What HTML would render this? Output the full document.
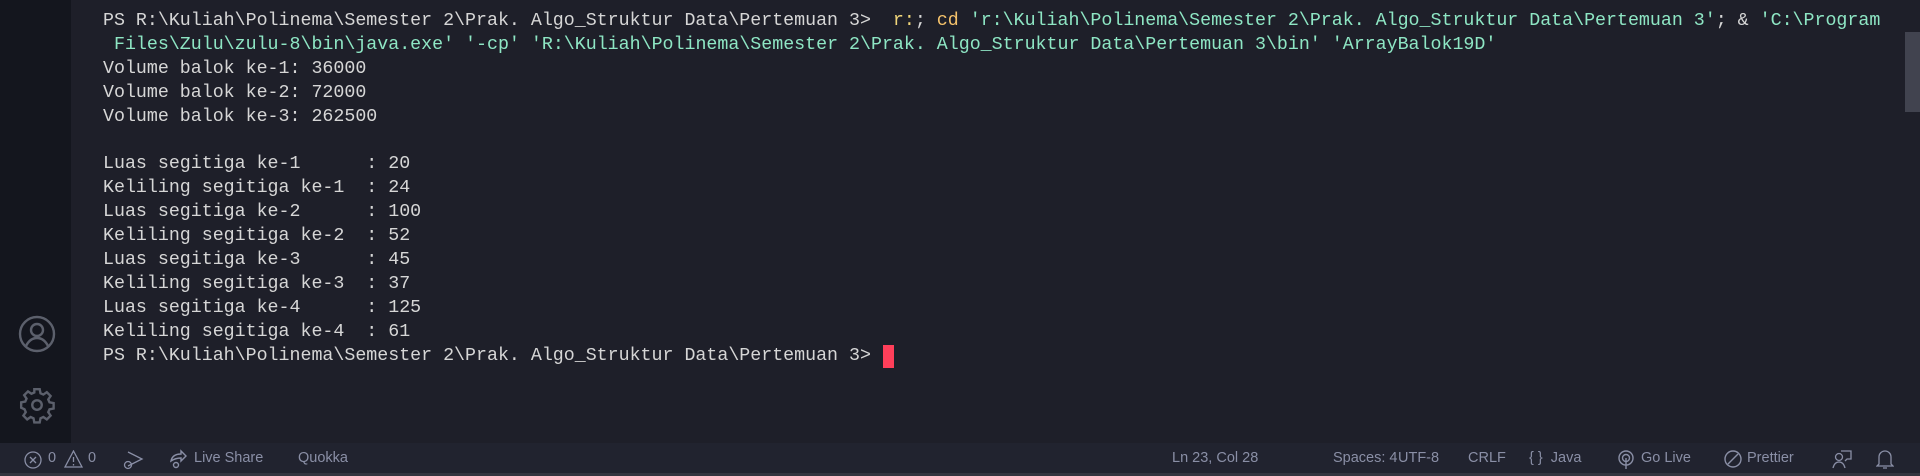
<!DOCTYPE html>
<html><head><meta charset="utf-8"><style>
*{margin:0;padding:0;box-sizing:border-box}
body{width:1920px;height:476px;background:#1e1f29;overflow:hidden;position:relative;font-family:"Liberation Sans",sans-serif}
#side{position:absolute;left:0;top:0;width:71px;height:443px;background:#14161e}
#term{position:absolute;left:103px;top:10px;font-family:"Liberation Mono",monospace;font-size:18.3px;line-height:23.9px;color:#d6d6d6;white-space:pre}
.y{color:#f1d67a}.o{color:#f5c26b}.t{color:#8ee6c4}
#sb{position:absolute;left:1905px;top:32px;width:15px;height:80px;background:#41434f}
#cur{position:absolute;left:883px;top:345px;width:11px;height:23px;background:#ff3f5a}
#status{position:absolute;left:0;top:443px;width:1920px;height:30px;background:#21232f;color:#8a8fa6;font-size:14.5px}
#status span{position:absolute;top:7px}
#strip{position:absolute;left:0;top:473px;width:1920px;height:3px;background:#33353f}
svg{position:absolute}
</style></head><body>
<div id="side">
<svg style="left:18px;top:315px" width="38" height="38" viewBox="0 0 38 38" fill="none" stroke="#5c606c" stroke-width="2.4"><circle cx="19" cy="19" r="17"/><circle cx="19" cy="15" r="6"/><path d="M8 31c3-6 7-8 11-8s8 2 11 8"/></svg>
<svg style="left:18px;top:386px" width="38" height="38" viewBox="0 0 24 24" fill="none" stroke="#5c606c" stroke-width="1.5"><circle cx="12" cy="12" r="3"/><path d="M10.3 2h3.4l.5 2.6 1.8.8 2.2-1.5 2.4 2.4-1.5 2.2.8 1.8 2.6.5v3.4l-2.6.5-.8 1.8 1.5 2.2-2.4 2.4-2.2-1.5-1.8.8-.5 2.6h-3.4l-.5-2.6-1.8-.8-2.200 1.5-2.4-2.4 1.5-2.2-.8-1.8L2 13.7v-3.4l2.6-.5.8-1.8-1.5-2.2 2.4-2.4 2.2 1.5 1.8-.8z"/></svg>
</div>
<div id="term">PS R:\Kuliah\Polinema\Semester 2\Prak. Algo_Struktur Data\Pertemuan 3&gt;  <span class="y">r:</span>; <span class="o">cd</span> <span class="t">'r:\Kuliah\Polinema\Semester 2\Prak. Algo_Struktur Data\Pertemuan 3'</span>; &amp; <span class="t">'C:\Program</span>
<span class="t"> Files\Zulu\zulu-8\bin\java.exe'</span> <span class="t">'-cp'</span> <span class="t">'R:\Kuliah\Polinema\Semester 2\Prak. Algo_Struktur Data\Pertemuan 3\bin'</span> <span class="t">'ArrayBalok19D'</span>
Volume balok ke-1: 36000
Volume balok ke-2: 72000
Volume balok ke-3: 262500

Luas segitiga ke-1      : 20
Keliling segitiga ke-1  : 24
Luas segitiga ke-2      : 100
Keliling segitiga ke-2  : 52
Luas segitiga ke-3      : 45
Keliling segitiga ke-3  : 37
Luas segitiga ke-4      : 125
Keliling segitiga ke-4  : 61
PS R:\Kuliah\Polinema\Semester 2\Prak. Algo_Struktur Data\Pertemuan 3&gt; </div>
<div id="cur"></div>
<div id="sb"></div>
<div id="status">
<svg style="left:24px;top:8px" width="18" height="18" viewBox="0 0 18 18" fill="none" stroke="#8a8fa6" stroke-width="1.3"><circle cx="9" cy="9" r="8"/><path d="M6 6l6 6M12 6l-6 6"/></svg>
<span style="left:48px">0</span>
<svg style="left:64px;top:7px" width="19" height="18" viewBox="0 0 19 18" fill="none" stroke="#8a8fa6" stroke-width="1.3"><path d="M9.5 1L18 17H1z"/><path d="M9.5 7v5M9.5 14v1.5"/></svg>
<span style="left:88px">0</span>
<svg style="left:122px;top:7px" width="22" height="20" viewBox="0 0 22 20" fill="none" stroke="#8a8fa6" stroke-width="1.3"><path d="M6 2l14 7-14 7"/><circle cx="6" cy="15" r="3.5"/></svg>
<svg style="left:168px;top:6px" width="20" height="20" viewBox="0 0 20 20" fill="none" stroke="#8a8fa6" stroke-width="1.4"><path d="M3 12c1-5 5-7 10-7V2l5 5-5 5V9c-4 0-7 1-10 3z"/><circle cx="8" cy="16" r="2.5"/></svg>
<span style="left:194px">Live Share</span>
<span style="left:298px">Quokka</span>
<span style="left:1172px">Ln 23, Col 28</span>
<span style="left:1333px">Spaces: 4</span>
<span style="left:1398px">UTF-8</span>
<span style="left:1468px">CRLF</span>
<span style="left:1529px">{ }&nbsp; Java</span>
<svg style="left:1617px;top:7px" width="18" height="20" viewBox="0 0 18 20" fill="none" stroke="#8a8fa6" stroke-width="1.4"><circle cx="9" cy="8" r="7"/><circle cx="9" cy="8" r="3.5"/><path d="M9 8v11"/></svg>
<span style="left:1641px">Go Live</span>
<svg style="left:1724px;top:7px" width="18" height="18" viewBox="0 0 18 18" fill="none" stroke="#8a8fa6" stroke-width="1.4"><circle cx="9" cy="9" r="8"/><path d="M4 14L14 4"/></svg>
<span style="left:1747px">Prettier</span>
<svg style="left:1832px;top:6px" width="20" height="20" viewBox="0 0 20 20" fill="none" stroke="#8a8fa6" stroke-width="1.3"><circle cx="7" cy="8" r="3.5"/><path d="M1 19c1-4 3-6 6-6s5 2 6 6M9 2h10v8h-4l-2 2"/></svg>
<svg style="left:1876px;top:5px" width="18" height="22" viewBox="0 0 18 22" fill="none" stroke="#8a8fa6" stroke-width="1.3"><path d="M3 16V9a6 6 0 0112 0v7l2 2H1zM7 20h4"/></svg>
</div>
<div id="strip"></div>
</body></html>
